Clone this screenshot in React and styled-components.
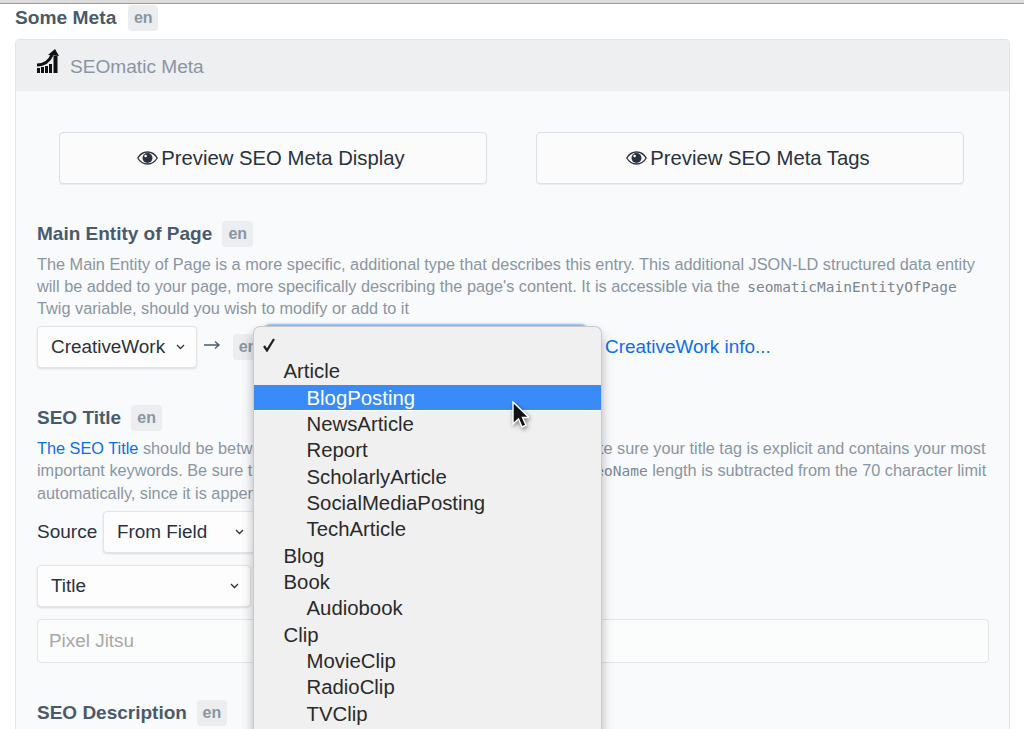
import React from "react";
import styled, { createGlobalStyle } from "styled-components";

const Global = createGlobalStyle`
  html, body { margin: 0; padding: 0; background: #fff; height: 729px; overflow: hidden; }
  body { font-family: "Liberation Sans", Arial, sans-serif; color: #29323d; }
`;
const Page = styled.div`
  position: relative; width: 1024px; height: 729px; overflow: hidden; background: #fff;
`;
const TopStrip = styled.div`
  height: 3px; background: #dcdcdc; border-bottom: 1px solid #9a9a9a;
`;
const Content = styled.div`
  padding: 1px 14px 0 15px;
`;
const Heading = styled.div`
  display: flex; align-items: center; gap: ${p => p.$gap || 10}px;
  font-size: ${p => p.$size || 19}px; font-weight: 700; color: #4a5a6d;
  height: 26px;
`;
const Badge = styled.span`
  display: inline-flex; align-items: center; justify-content: center; flex: none;
  width: ${p => p.$w || 30}px; height: 26px; border-radius: 4px; background: #ebedef;
  font-size: 16px; font-weight: 700; color: #8a95a2; margin-left: ${p => p.$left || 0}px;
`;
const Panel = styled.div`
  margin-top: 8px; border: 1px solid #e3e5e8; border-radius: 4px; background: #f9fafb;
  height: 800px;
`;
const PanelHead = styled.div`
  height: 51px; background: #eeeff1; display: flex; align-items: center; gap: 11px;
  padding-left: 21px; font-size: 19.1px; color: #8a95a2; box-sizing: border-box;
`;
const PanelTitle = styled.span`
  padding-top: 3px;
`;
const PanelBody = styled.div`
  padding: 41px 21px 0 21px;
`;
const PreviewRow = styled.div`
  display: flex; gap: 49px; padding-left: 22px;
`;
const PreviewBtn = styled.div`
  width: 428px; height: 52px; box-sizing: border-box; border: 1px solid #dcdfe3; border-radius: 4px;
  background: #fbfbfc; display: flex; align-items: center; justify-content: center; gap: 3px;
  padding-right: 4px;
  font-size: 20.3px; color: #29323d; box-shadow: 0 1px 1px rgba(0,0,0,.06);
`;
const Section = styled.div`
  margin-top: ${p => p.$top}px;
`;
const Desc = styled.p`
  margin: 7px 0 0; font-size: 16.3px; line-height: 21.7px; color: #8a95a2; width: 960px; white-space: nowrap;
`;
const Code = styled.code`
  font-family: "DejaVu Sans Mono", monospace; font-size: 14.5px; color: #7b8693;
  margin-left: ${p => p.$left || 0}px;
`;
const Link = styled.a`
  color: #0d6fe8; text-decoration: none;
`;
const Row = styled.div`
  display: flex; align-items: center; margin-top: ${p => p.$top || 0}px;
`;
const Select = styled.div`
  width: ${p => p.$w}px; height: 42px; box-sizing: border-box; flex: none;
  background: #fdfdfd; border: 1px solid #e2e4e7; border-radius: 4px;
  box-shadow: 0 1px 2px rgba(0,0,0,.12);
  display: flex; align-items: center; justify-content: space-between;
  padding: 0 11px 0 13px; font-size: 18.9px; color: #29323d;
`;
const Arrow = styled.span`
  margin: -4px 0 0 7px; width: 16px; display: flex;
`;
const OutlinedSelect = styled.div`
  width: 321px; height: 42px; flex: none; box-sizing: border-box;
  border: 1px solid #6aaef0; border-radius: 5px; background: #fff;
  box-shadow: 0 0 2px 2px rgba(90,165,240,.75);
  margin-left: 2px;
`;
const InfoLink = styled(Link)`
  margin-left: 19px; font-size: 18.93px;
`;
const Label = styled.span`
  font-size: 19px; color: #29323d; width: 66px; flex: none;
`;
const Input = styled.div`
  margin-top: 12px; height: 44px; box-sizing: border-box; width: 952px;
  border: 1px solid #e2e4e7; border-radius: 4px; background: #fbfcfc;
  display: flex; align-items: center; padding-left: 11px; font-size: 18.9px; color: #a8a8a8;
`;
const Menu = styled.div`
  position: absolute; left: 253px; top: 326px; width: 349px; height: 440px; box-sizing: border-box;
  background: #f0f0f0; border-radius: 7px 7px 0 0; border: 1px solid #c9c9c9; border-bottom: none;
  box-shadow: 0 7px 12px rgba(0,0,0,.28); padding-top: 5px;
`;
const MenuItem = styled.div`
  height: 26.35px; line-height: 26px; box-sizing: border-box; font-size: 20.35px; color: #2a2a2a;
  padding-left: ${p => (p.$depth === 2 ? 52.5 : 29.5)}px;
  ${p => p.$active && "background: #3a8bf7; color: #fff; border-bottom: 1px solid #fff;"}
`;
const CheckRow = styled.div`
  height: 26.35px; padding-left: 8px; display: flex; align-items: center;
`;
const Cursor = styled.svg`
  position: absolute; left: 511px; top: 401px; width: 18px; height: 29px;
  filter: drop-shadow(1px 2px 2px rgba(0,0,0,.45));
`;

const Eye = () => (
  <svg width="21" height="14" viewBox="0 0 21 14">
    <path d="M.8 7C3 3.2 6.4 1 10.5 1s7.5 2.2 9.7 6c-2.2 3.8-5.6 6-9.7 6S3 10.8.8 7z" fill="none" stroke="#29323d" strokeWidth="1.3"/>
    <circle cx="10.5" cy="7" r="5" fill="#29323d"/>
    <circle cx="8.6" cy="5" r="1.3" fill="#fff"/>
  </svg>
);
const Chevron = () => (
  <svg width="9" height="6" viewBox="0 0 9 6"><path d="M1 1l3.5 3.5L8 1" fill="none" stroke="#29323d" strokeWidth="1.3"/></svg>
);
const Logo = () => (
  <svg width="22" height="24" viewBox="0 0 22 24" style={{ marginTop: -9 }}>
    <path d="M0 19h3v5H0zM4 18h3v6H4zM8 17h3v7H8zM12 15h3v9h-3zM16.5 7h4v17h-4z" fill="#111"/>
    <path d="M0 16c7 0 12-3 15-10" fill="none" stroke="#111" strokeWidth="3"/>
    <path d="M11 6l7-6 4 7z" fill="#111"/>
  </svg>
);
const Tick = () => (
  <svg width="14" height="14" viewBox="0 0 14 14"><path d="M2 8l3 4.4L12 1" fill="none" stroke="#222" strokeWidth="2.3"/></svg>
);

const items = [
  ["Article", 1], ["BlogPosting", 2, true], ["NewsArticle", 2], ["Report", 2], ["ScholarlyArticle", 2],
  ["SocialMediaPosting", 2], ["TechArticle", 2], ["Blog", 1], ["Book", 1], ["Audiobook", 2], ["Clip", 1],
  ["MovieClip", 2], ["RadioClip", 2], ["TVClip", 2],
];

export default function App() {
  return (
    <Page>
      <Global />
      <TopStrip />
      <Content>
        <Heading $size={19.2} $gap={12}>Some Meta <Badge>en</Badge></Heading>
        <Panel>
          <PanelHead><Logo /><PanelTitle>SEOmatic Meta</PanelTitle></PanelHead>
          <PanelBody>
            <PreviewRow>
              <PreviewBtn><Eye />Preview SEO Meta Display</PreviewBtn>
              <PreviewBtn><Eye />Preview SEO Meta Tags</PreviewBtn>
            </PreviewRow>
            <Section $top={37}>
              <Heading>Main Entity of Page <Badge $w={31}>en</Badge></Heading>
              <Desc>
                The Main Entity of Page is a more specific, additional type that describes this entry. This additional JSON-LD structured data entity<br />
                will be added to your page, more specifically describing the page's content. It is accessible via the <Code $left={3}>seomaticMainEntityOfPage</Code><br />
                Twig variable, should you wish to modify or add to it
              </Desc>
              <Row $top={6}>
                <Select $w={160}>CreativeWork <Chevron /></Select>
                <Arrow>
                  <svg width="16" height="10" viewBox="0 0 16 10"><path d="M0 5h14.5M11 1.5L15 5l-4 3.5" fill="none" stroke="#4a5a6d" strokeWidth="1.4"/></svg>
                </Arrow>
                <Badge $left={13}>en</Badge>
                <OutlinedSelect />
                <InfoLink>CreativeWork info...</InfoLink>
              </Row>
            </Section>
            <Section $top={37}>
              <Heading>SEO Title <Badge $w={31}>en</Badge></Heading>
              <Desc>
                <Link>The SEO Title</Link> should be between 10-70 characters (spaces included). Do make sure your title tag is explicit and contains your most<br />
                important keywords. Be sure that each page has a unique title tag. The <Code>siteSeoName</Code> length is subtracted from the 70 character limit<br />
                automatically, since it is appended to the title.
              </Desc>
              <Row $top={7}>
                <Label>Source</Label>
                <Select $w={153}>From Field <Chevron /></Select>
              </Row>
              <Row $top={12}>
                <Select $w={214}>Title <Chevron /></Select>
              </Row>
              <Input>Pixel Jitsu</Input>
            </Section>
            <Section $top={37}>
              <Heading>SEO Description <Badge>en</Badge></Heading>
            </Section>
          </PanelBody>
        </Panel>
      </Content>
      <Menu>
        <CheckRow><Tick /></CheckRow>
        {items.map(([t, d, a]) => <MenuItem key={t} $depth={d} $active={a}>{t}</MenuItem>)}
      </Menu>
      <Cursor viewBox="0 0 18 29">
        <path d="M2 1v22l5.5-5 3.5 8 4-1.8-3.5-7.7H18z" fill="#111" stroke="#fff" strokeWidth="1.4"/>
      </Cursor>
    </Page>
  );
}
